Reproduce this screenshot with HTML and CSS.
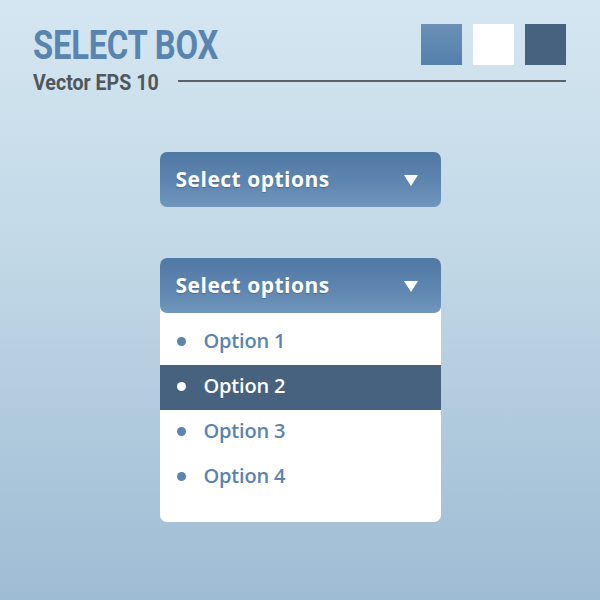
FILE: index.html
```html
<!DOCTYPE html>
<html>
<head>
<meta charset="utf-8">
<link rel="stylesheet" href="styles.css">
</head>
<body>
<div class="page">
  <header class="head">
    <div class="top-row">
      <h1 class="title">SELECT BOX</h1>
      <div class="swatches">
        <span class="sw sw-mid"></span>
        <span class="sw sw-white"></span>
        <span class="sw sw-dark"></span>
      </div>
    </div>
    <div class="sub-row">
      <span class="subtitle">Vector EPS 10</span>
      <span class="rule"></span>
    </div>
  </header>

  <main class="stage">
    <div class="select">
      <div class="select-head">
        <span class="label">Select options</span>
        <span class="arrow"></span>
      </div>
    </div>

    <div class="select open">
      <div class="select-head">
        <span class="label">Select options</span>
        <span class="arrow"></span>
      </div>
      <ul class="options">
        <li class="opt"><span class="dot"></span>Option 1</li>
        <li class="opt active"><span class="dot"></span>Option 2</li>
        <li class="opt"><span class="dot"></span>Option 3</li>
        <li class="opt"><span class="dot"></span>Option 4</li>
      </ul>
    </div>
  </main>
</div>
</body>
</html>
```

FILE: styles.css
```css
* { box-sizing: border-box; }
html, body { margin: 0; padding: 0; }
body {
  width: 600px;
  height: 600px;
  overflow: hidden;
  background: linear-gradient(to bottom, #d4e6f1 0%, #c3d9e7 40%, #9ebcd4 100%);
  font-family: "Open Sans", "DejaVu Sans", sans-serif;
}
.page {
  padding: 24px 34px 0 33px;
}
.head {
  display: flex;
  flex-direction: column;
}
.top-row {
  display: flex;
  justify-content: space-between;
  align-items: flex-start;
  height: 41px;
}
.title {
  margin: 0;
  font-family: "Roboto", "Liberation Sans", sans-serif;
  font-weight: 700;
  font-size: 40px;
  line-height: 44px;
  color: #5a84b0;
  transform: scaleX(0.82);
  transform-origin: left center;
  letter-spacing: -0.3px;
  white-space: nowrap;
}
.sub-row {
  display: flex;
  align-items: center;
  margin-top: 3px;
  height: 28px;
}
.subtitle {
  font-family: "Roboto", "Liberation Sans", sans-serif;
  font-weight: 700;
  font-size: 22px;
  color: #51565c;
  display: inline-block;
  width: 127px;
  white-space: nowrap;
  transform: scaleX(0.89);
  transform-origin: left center;
}
.rule {
  flex: 1;
  height: 2px;
  background: #5a6068;
  margin-left: 18px;
  margin-top: -2px;
}
.swatches {
  display: flex;
  gap: 11px;
}
.sw {
  width: 41px;
  height: 41px;
  display: block;
}
.sw-mid { background: linear-gradient(to bottom, #6b90b6, #5480ad); }
.sw-white { background: #ffffff; }
.sw-dark { background: #46627f; }

.stage {
  display: flex;
  flex-direction: column;
  align-items: center;
  gap: 51px;
  margin-top: 56px;
  padding-left: 1px;
}
.select {
  width: 281px;
  border-radius: 7px;
}
.select.open {
  background: #ffffff;
  padding-bottom: 22px;
}
.select-head {
  height: 55px;
  border-radius: 7px;
  background: linear-gradient(to bottom, #4f78a3 0%, #5f87b1 60%, #7097bb 100%);
  display: flex;
  align-items: center;
  justify-content: space-between;
  padding: 0 23px 0 16px;
}
.label {
  color: #ffffff;
  font-weight: 700;
  font-size: 21px;
  letter-spacing: 0.5px;
  text-shadow: 0 1px 1px rgba(40, 60, 90, 0.35);
  margin-top: -1px;
}
.arrow {
  width: 0;
  height: 0;
  border-left: 7px solid transparent;
  border-right: 7px solid transparent;
  border-top: 11px solid #ffffff;
  margin-top: 1px;
}
.options {
  list-style: none;
  margin: 0;
  padding: 7px 0 0 0;
}
.opt {
  height: 45px;
  display: flex;
  align-items: center;
  padding-left: 17px;
  padding-bottom: 4px;
  color: #5b84ae;
  font-weight: 600;
  font-size: 20px;
  letter-spacing: -0.2px;
}
.dot {
  width: 9px;
  height: 9px;
  border-radius: 50%;
  background: #5b84ae;
  margin-right: 18px;
  margin-top: 2px;
}
.opt.active {
  background: #46627f;
  color: #ffffff;
}
.opt.active .dot { background: #ffffff; }
```
